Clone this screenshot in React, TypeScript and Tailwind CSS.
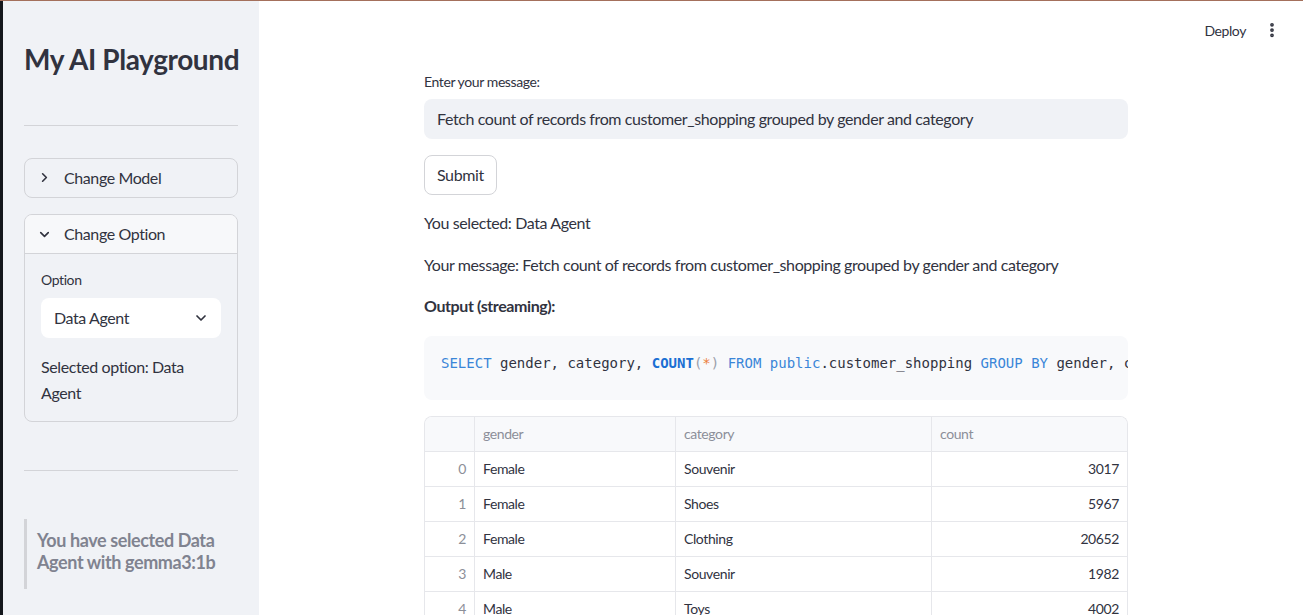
import React from 'react';
import { ChevronRight, ChevronDown, EllipsisVertical } from 'lucide-react';

const rows = [
  { i: 0, gender: 'Female', category: 'Souvenir', count: 3017 },
  { i: 1, gender: 'Female', category: 'Shoes', count: 5967 },
  { i: 2, gender: 'Female', category: 'Clothing', count: 20652 },
  { i: 3, gender: 'Male', category: 'Souvenir', count: 1982 },
  { i: 4, gender: 'Male', category: 'Toys', count: 4002 },
];

const font = { fontFamily: 'Lato, "Noto Sans", sans-serif', letterSpacing: '-0.025em' };

const Sidebar = () => (
  <aside className="w-[256px] shrink-0 bg-[#f0f2f6] px-[21px] pt-[38px] text-[#31333f]">
    <h1 className="whitespace-nowrap text-[28px] font-bold leading-[40px]">My AI Playground</h1>

    <div className="mt-[46px] h-px bg-[#d3d4d8]" />

    {/* Свернутый expander */}
    <div className="mt-[32px] flex h-[40px] items-center gap-[12px] rounded-[8px] border border-[#d3d4d8] px-[12px] pb-px">
      <ChevronRight size={15} strokeWidth={2.6} />
      <span className="text-[16px]">Change Model</span>
    </div>

    {/* Открытый expander */}
    <div className="mt-[16px] overflow-hidden rounded-[8px] border border-[#d3d4d8]">
      <div className="flex h-[39px] items-center gap-[12px] border-b border-[#d3d4d8] bg-[#f7f8fa] px-[12px]">
        <ChevronDown size={15} strokeWidth={2.6} />
        <span className="text-[16px]">Change Option</span>
      </div>
      <div className="px-[16px] pt-[16px] pb-[15px]">
        <div className="text-[14px] leading-[20px]">Option</div>
        <div className="mt-[8px] flex h-[40px] items-center justify-between rounded-[8px] bg-white pl-[13px] pr-[12px]">
          <span className="text-[16px]">Data Agent</span>
          <ChevronDown size={16} strokeWidth={2.6} />
        </div>
        <p className="mt-[16px] text-[16px] leading-[26px]">Selected option: Data Agent</p>
      </div>
    </div>

    <div className="mt-[48px] h-px bg-[#d3d4d8]" />

    <div className="mt-[48px] border-l-[3px] border-[#d3d4d8] pl-[10px] pt-[10px] pb-[16px]">
      <p className="text-[18px] font-bold leading-[22px] text-[#808390]">
        You have selected Data Agent with gemma3:1b
      </p>
    </div>
  </aside>
);

const Code = () => (
  <div
    className="mt-[17px] overflow-hidden whitespace-nowrap rounded-[8px] bg-[#f8f9fb] pl-[17px] pt-[17px] pb-[26px] leading-[21px] text-[#31333f]"
    style={{ fontFamily: '"DejaVu Sans Mono", "Liberation Mono", monospace', fontSize: '14px', letterSpacing: 0 }}
  >
    <span className="text-[#3a86d8]">SELECT</span> gender, category,{' '}
    <span className="font-bold text-[#1a6fd3]">COUNT</span>
    <span className="text-[#9aa0ab]">(</span>
    <span className="text-[#ec7f3b]">*</span>
    <span className="text-[#9aa0ab]">)</span> <span className="text-[#3a86d8]">FROM</span>{' '}
    <span className="text-[#3a86d8]">public</span>.customer_shopping{' '}
    <span className="text-[#3a86d8]">GROUP</span> <span className="text-[#3a86d8]">BY</span> gender, category
  </div>
);

const DataTable = () => (
  <div className="mt-[16px] overflow-hidden rounded-t-[8px] border border-b-0 border-[#e6e7eb] text-[14px]">
    <div className="grid h-[35px] grid-cols-[50px_201px_256px_1fr] border-b border-[#e6e7eb] bg-[#f8f9fb] text-[#8c8f99]">
      <div className="border-r border-[#e6e7eb]" />
      <div className="flex items-center border-r border-[#e6e7eb] px-[8px]">gender</div>
      <div className="flex items-center border-r border-[#e6e7eb] px-[8px]">category</div>
      <div className="flex items-center px-[8px]">count</div>
    </div>
    {rows.map((r) => (
      <div key={r.i} className="grid h-[35px] grid-cols-[50px_201px_256px_1fr] border-b border-[#e6e7eb] text-[#31333f]">
        <div className="flex items-center justify-end border-r border-[#e6e7eb] px-[8px] text-[#8c8f99]">{r.i}</div>
        <div className="flex items-center border-r border-[#e6e7eb] px-[8px]">{r.gender}</div>
        <div className="flex items-center border-r border-[#e6e7eb] px-[8px]">{r.category}</div>
        <div className="flex items-center justify-end px-[8px]">{r.count}</div>
      </div>
    ))}
  </div>
);

export default function App() {
  return (
    <div className="flex h-[615px] flex-col overflow-hidden bg-white" style={font}>
      <div className="h-px shrink-0 bg-[#a4705c]" />
      <div className="flex min-h-0 flex-1">
        <div className="w-[3px] shrink-0 bg-[#14171c]" />
        <Sidebar />
        <main className="flex min-w-0 flex-1 flex-col text-[#31333f]">
          <div className="flex h-[58px] shrink-0 items-center justify-end gap-[17px] pr-[22px]">
            <span className="text-[14px]">Deploy</span>
            <EllipsisVertical size={18} strokeWidth={3} />
          </div>
          <div className="ml-[165px] mt-[13px] w-[704px]">
            <label className="block text-[14px] leading-[20px]">Enter your message:</label>
            <div className="mt-[7px] flex h-[40px] items-center rounded-[8px] bg-[#f0f2f6] px-[13px] text-[16px]">
              Fetch count of records from customer_shopping grouped by gender and category
            </div>
            <button className="mt-[16px] flex h-[40px] items-center rounded-[8px] border border-[#d3d4d8] bg-white px-[12px] text-[16px]">
              Submit
            </button>
            <p className="mt-[15px] text-[16px] leading-[25.6px]">You selected: Data Agent</p>
            <p className="mt-[16px] text-[16px] leading-[25.6px]">
              Your message: Fetch count of records from customer_shopping grouped by gender and category
            </p>
            <p className="mt-[16px] text-[16px] font-bold leading-[25.6px]">Output (streaming):</p>
            <Code />
            <DataTable />
          </div>
        </main>
      </div>
    </div>
  );
}
